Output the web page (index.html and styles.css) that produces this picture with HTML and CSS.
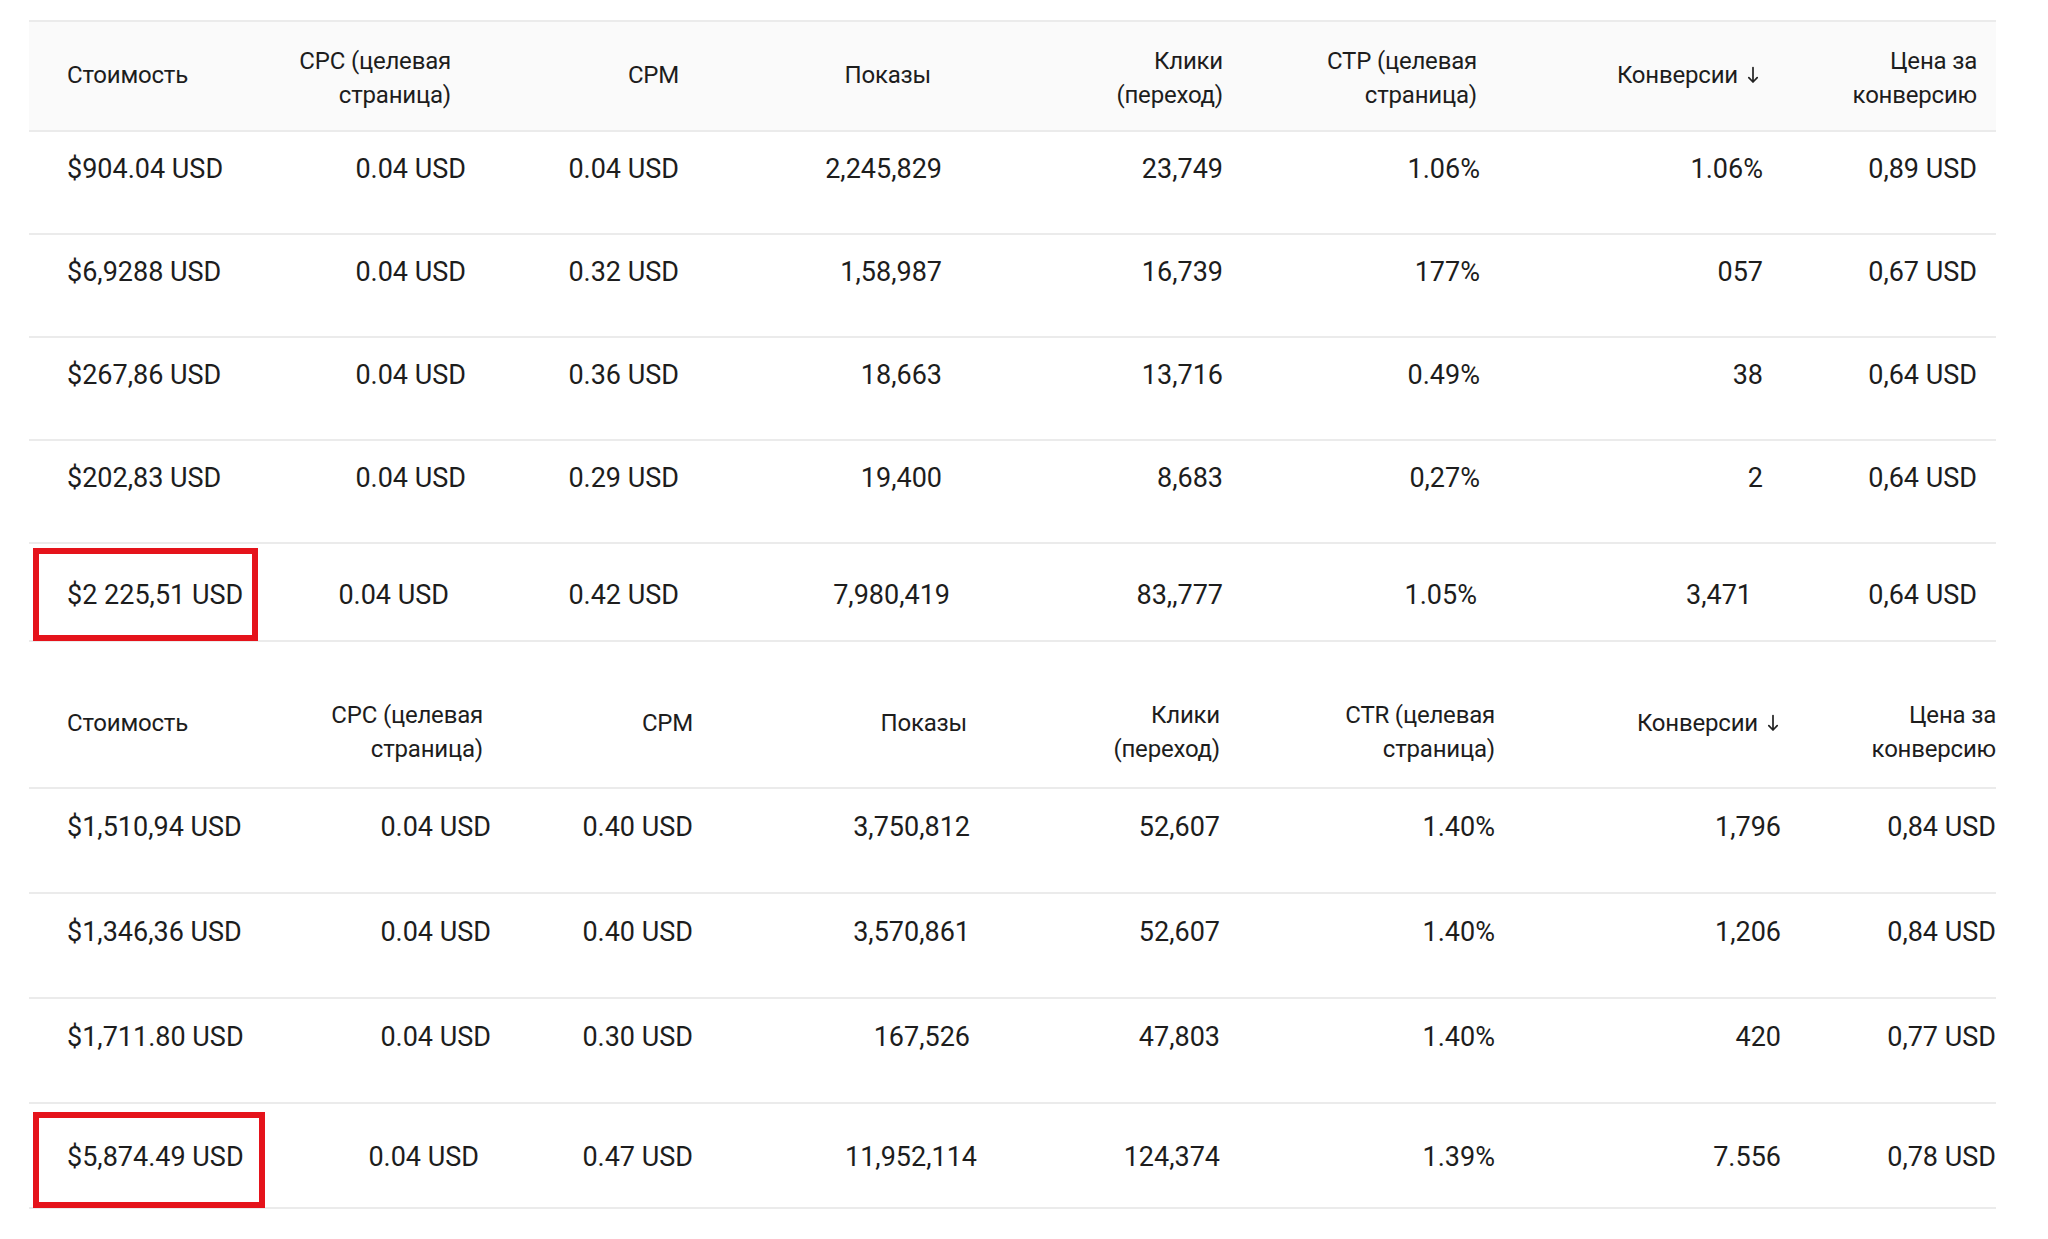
FILE: index.html
```html
<!DOCTYPE html>
<html lang="ru">
<head>
<meta charset="utf-8">
<title>Таблица</title>
<link rel="stylesheet" href="styles.css">
</head>
<body>
<div class="page">
  <div class="tbl t1">
    <div class="row head">
      <div class="c first one">Стоимость</div>
      <div class="c two pr15">CPC (целевая<br>страница)</div>
      <div class="c one">CPM</div>
      <div class="c one pr11">Показы</div>
      <div class="c two">Клики<br>(переход)</div>
      <div class="c two pr3">СТР (целевая<br>страница)</div>
      <div class="c one pr4">Конверсии<svg class="arrow" viewBox="0 0 12 18" width="12" height="18"><path d="M6 1.5V16M1.8 11.6L6 16l4.2-4.4"/></svg></div>
      <div class="c two">Цена за<br>конверсию</div>
    </div>
    <div class="row r">
      <div class="c first">$904.04 USD</div>
      <div class="c">0.04 USD</div>
      <div class="c">0.04 USD</div>
      <div class="c">2,245,829</div>
      <div class="c">23,749</div>
      <div class="c">1.06%</div>
      <div class="c">1.06%</div>
      <div class="c">0,89 USD</div>
    </div>
    <div class="row r">
      <div class="c first">$6,9288 USD</div>
      <div class="c">0.04 USD</div>
      <div class="c">0.32 USD</div>
      <div class="c">1,58,987</div>
      <div class="c">16,739</div>
      <div class="c">177%</div>
      <div class="c">057</div>
      <div class="c">0,67 USD</div>
    </div>
    <div class="row r">
      <div class="c first">$267,86 USD</div>
      <div class="c">0.04 USD</div>
      <div class="c">0.36 USD</div>
      <div class="c">18,663</div>
      <div class="c">13,716</div>
      <div class="c">0.49%</div>
      <div class="c">38</div>
      <div class="c">0,64 USD</div>
    </div>
    <div class="row r">
      <div class="c first">$202,83 USD</div>
      <div class="c">0.04 USD</div>
      <div class="c">0.29 USD</div>
      <div class="c">19,400</div>
      <div class="c">8,683</div>
      <div class="c">0,27%</div>
      <div class="c">2</div>
      <div class="c">0,64 USD</div>
    </div>
    <div class="row r last">
      <div class="c first hl">$2 225,51 USD<span class="box box1"></span></div>
      <div class="c pr17">0.04 USD</div>
      <div class="c">0.42 USD</div>
      <div class="c mr8">7,980,419</div>
      <div class="c">83,,777</div>
      <div class="c pr3">1.05%</div>
      <div class="c pr11">3,471</div>
      <div class="c">0,64 USD</div>
    </div>
  </div>

  <div class="tbl t2">
    <div class="row head">
      <div class="c first one">Стоимость</div>
      <div class="c two pr8">CPC (целевая<br>страница)</div>
      <div class="c one">CPM</div>
      <div class="c one pr3">Показы</div>
      <div class="c two">Клики<br>(переход)</div>
      <div class="c two">CTR (целевая<br>страница)</div>
      <div class="c one pr2">Конверсии<svg class="arrow" viewBox="0 0 12 18" width="12" height="18"><path d="M6 1.5V16M1.8 11.6L6 16l4.2-4.4"/></svg></div>
      <div class="c two">Цена за<br>конверсию</div>
    </div>
    <div class="row r">
      <div class="c first">$1,510,94 USD</div>
      <div class="c">0.04 USD</div>
      <div class="c">0.40 USD</div>
      <div class="c">3,750,812</div>
      <div class="c">52,607</div>
      <div class="c">1.40%</div>
      <div class="c">1,796</div>
      <div class="c">0,84 USD</div>
    </div>
    <div class="row r">
      <div class="c first">$1,346,36 USD</div>
      <div class="c">0.04 USD</div>
      <div class="c">0.40 USD</div>
      <div class="c">3,570,861</div>
      <div class="c">52,607</div>
      <div class="c">1.40%</div>
      <div class="c">1,206</div>
      <div class="c">0,84 USD</div>
    </div>
    <div class="row r">
      <div class="c first">$1,711.80 USD</div>
      <div class="c">0.04 USD</div>
      <div class="c">0.30 USD</div>
      <div class="c">167,526</div>
      <div class="c">47,803</div>
      <div class="c">1.40%</div>
      <div class="c">420</div>
      <div class="c">0,77 USD</div>
    </div>
    <div class="row r last">
      <div class="c first hl">$5,874.49 USD<span class="box box2"></span></div>
      <div class="c pr12">0.04 USD</div>
      <div class="c">0.47 USD</div>
      <div class="c mr7">11,952,114</div>
      <div class="c">124,374</div>
      <div class="c">1.39%</div>
      <div class="c">7.556</div>
      <div class="c">0,78 USD</div>
    </div>
  </div>
</div>
</body>
</html>
```

FILE: styles.css
```css
* { box-sizing: border-box; }

body {
  margin: 0;
  background: #ffffff;
  color: #1d1d1d;
  font-family: Roboto, "Open Sans", "DejaVu Sans", sans-serif;
  font-size: 24px;
  line-height: 34px;
  letter-spacing: -0.2px;
}

.page {
  padding: 20px 52px 0 29px;
}

.row {
  display: grid;
  border-bottom: 2px solid #ebebeb;
}

.t1 .row {
  grid-template-columns: 211px 226px 213px 263px 281px 257px 283px 214px;
  padding-right: 19px;
}

.t2 .row {
  grid-template-columns: 231px 231px 202px 277px 250px 275px 286px 215px;
}

.c {
  display: flex;
  justify-content: flex-end;
  text-align: right;
  white-space: nowrap;
}

.c.first {
  justify-content: flex-start;
  text-align: left;
  padding-left: 38px;
}

/* header rows */
.head .c {
  align-items: center;
}

.t1 .head {
  border-top: 2px solid #ebebeb;
  background: #fafafa;
  height: 112px;
}
.t1 .head .one { padding-bottom: 3px; }
.t1 .head .two { padding-top: 3px; }

.t2 .head {
  margin-top: 22px;
  background: #ffffff;
  height: 125px;
}
.t2 .head .one { padding-bottom: 6px; }
.t2 .head .two { padding-top: 12px; }

/* body rows */
.r {
  font-size: 27px;
  letter-spacing: 0;
}

.r .c {
  align-items: flex-start;
}

.t1 .r {
  height: 103px;
}
.t1 .r .c {
  padding-top: 20px;
}

.t2 .r {
  height: 105px;
}
.t2 .r .c {
  padding-top: 21px;
}

.t1 .r.last {
  height: 98px;
}

.t1 .r.last .c {
  align-items: center;
  padding-top: 6px;
}

.t2 .r.last .c {
  align-items: center;
  padding-top: 2px;
}

.arrow {
  width: 12px;
  height: 18px;
  margin-left: 9px;
  align-self: center;
  fill: none;
  stroke: #222222;
  stroke-width: 1.7;
  stroke-linecap: round;
  stroke-linejoin: round;
}

/* highlight annotations */
.hl {
  position: relative;
}

.box {
  position: absolute;
  border: 6px solid #e5131b;
}

.box1 {
  left: 4px;
  top: 4px;
  width: 225px;
  height: 93px;
}

.box2 {
  left: 4px;
  top: 8px;
  width: 232px;
  height: 96px;
}

/* per-cell nudges */
.pr2 { padding-right: 2px; }
.pr3 { padding-right: 3px; }
.pr4 { padding-right: 4px; }
.pr8 { padding-right: 8px; }
.pr11 { padding-right: 11px; }
.pr12 { padding-right: 12px; }
.pr15 { padding-right: 15px; }
.pr17 { padding-right: 17px; }
.mr7 { margin-right: -7px; }
.mr8 { margin-right: -8px; }
```
